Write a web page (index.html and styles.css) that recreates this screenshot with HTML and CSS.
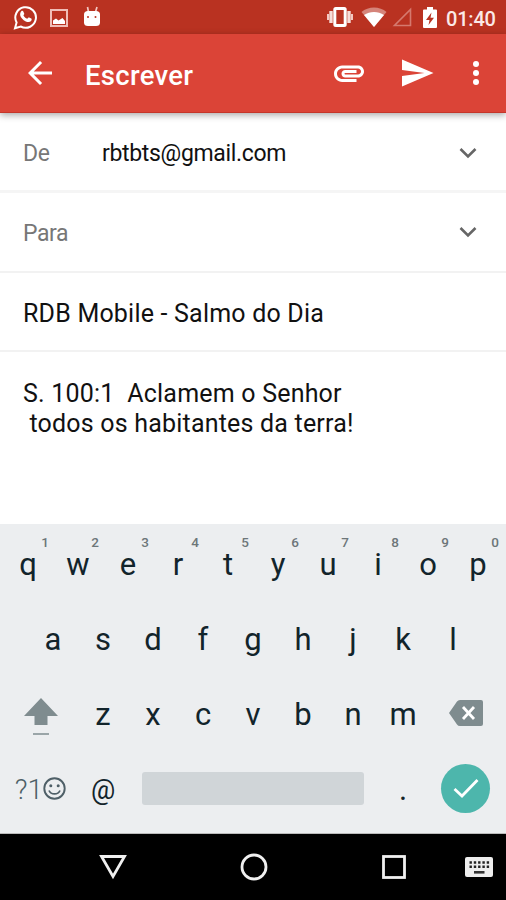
FILE: index.html
```html
<!DOCTYPE html>
<html lang="pt-BR">
<head>
    <meta charset="UTF-8">
    <meta name="viewport" content="width=device-width, initial-scale=1.0">
    <title>Escrever</title>
    <link rel="stylesheet" href="styles.css">
</head>
<body>
    <div class="status">
        <svg class="whats" width="25" height="26" viewBox="0 0 25 26">
            <path d="M2 24.200l1.600-5.800A10.300 10.300 0 1 1 7.700 22.500z" fill="none" stroke="#fff" stroke-width="2"/>
            <path d="M8.300 7.200c.8-.8 1.700-.5 2 .2l.9 2c.2.700-.2 1.100-.8 1.800.9 1.700 2.100 2.800 3.900 3.500.8-.9 1.200-1.500 1.900-1.200l2.100 1c.7.400.4 1.700-.2 2.400-1.200 1.300-3 1.500-5.300.5-3-1.300-5.200-4.200-5.600-6.200-.2-1.700.3-3.100 1.100-4z" fill="#fff"/>
        </svg>
        <svg class="image" width="18" height="18" viewBox="0 0 18 18">
            <rect x="1" y="1" width="16" height="16" fill="none" stroke="#f0bdb6" stroke-width="2"/>
            <path d="M3 15v-3.500l3-2 2.500 2 4-2.500 2.500 3V15z" fill="#fff"/>
        </svg>
        <svg class="droid" width="18" height="21" viewBox="0 0 18 21">
            <path d="M4.500 1l1 5M14 1l-1.500 5" stroke="#f3c8c2" stroke-width="1.700"/>
            <path d="M1 8.500q0-3.500 4-3.500h8q4 0 4 3.500v8q0 3.500-4 3.500H5q-4 0-4-3.500z" fill="#fff"/>
            <circle cx="5" cy="11" r="1" fill="#b93221"/>
            <circle cx="12.500" cy="11" r="1" fill="#b93221"/>
        </svg>
        <div class="right">
            <svg class="vibrate" width="26" height="20" viewBox="0 0 26 20">
                <path d="M1 7v6M25 7v6" stroke="#f3c8c2" stroke-width="2"/>
                <path d="M4 4v12M22 4v12" stroke="#f7dcd8" stroke-width="3.400"/>
                <rect x="7.800" y="1.500" width="10.400" height="17" rx="1" fill="none" stroke="#fff" stroke-width="3"/>
            </svg>
            <svg class="wifi" width="26" height="20" viewBox="0 0 26 20">
                <path d="M0.500 5C7-1 19-1 25.500 5L13 20z" fill="#d5847a"/>
                <path d="M3 8C9 4 17 4 23 8L13 20z" fill="#fff"/>
            </svg>
            <svg class="signal" width="20" height="20" viewBox="0 0 20 20">
                <path d="M2.500 18.500h16v-16z" fill="none" stroke="#d5796e" stroke-width="1.600"/>
            </svg>
            <svg class="battery" width="14" height="21" viewBox="0 0 14 21">
                <path d="M4 0h6v2.500h3q1 0 1 1V20q0 1-1 1H1q-1 0-1-1V3.500q0-1 1-1h3z" fill="#fff"/>
                <path d="M8.500 5.500L3 13h3.500L5.500 18 11 10.800H7.500z" fill="#b93221"/>
            </svg>
            <span class="time">01:40</span>
        </div>
    </div>

    <div class="toolbar">
        <svg class="icon" viewBox="0 0 24 24"><path d="M20 11H7.830l5.590-5.590L12 4l-8 8 8 8 1.410-1.410L7.830 13H20v-2z"/></svg>
        <h1>Escrever</h1>
        <svg class="icon attach" viewBox="0 0 24 24"><path d="M2 12.500C2 9.460 4.460 7 7.500 7H18c2.210 0 4 1.790 4 4s-1.790 4-4 4H9.500C8.120 15 7 13.880 7 12.500S8.120 10 9.500 10H17v2H9.410c-.55 0-.55 1 0 1H18c1.100 0 2-.9 2-2s-.9-2-2-2H7.500C5.570 9 4 10.570 4 12.500S5.570 16 7.500 16H17v2H7.500C4.460 18 2 15.540 2 12.500z"/></svg>
        <svg class="icon send" viewBox="0 0 24 24"><path d="M2.010 21L23 12 2.010 3 2 10l15 2-15 2z"/></svg>
        <svg class="icon more" viewBox="0 0 24 24"><circle cx="12" cy="6" r="2"/><circle cx="12" cy="12" r="2"/><circle cx="12" cy="18" r="2"/></svg>
    </div>

    <div class="mail">
        <div class="row from">
            <span class="label">De</span>
            <span class="address">rbtbts@gmail.com</span>
            <svg class="arrow" width="18" height="12" viewBox="0 0 18 12"><path d="M1.500 2L9 9.500 16.500 2"/></svg>
        </div>
        <div class="row to">
            <span class="label">Para</span>
            <svg class="arrow" width="18" height="12" viewBox="0 0 18 12"><path d="M1.500 2L9 9.500 16.500 2"/></svg>
        </div>
        <div class="row subject">RDB Mobile - Salmo do Dia</div>
        <div class="message"><p class="line1">S. 100:1  Aclamem o Senhor</p><p class="line2"> todos os habitantes da terra!</p></div>
    </div>

    <div class="keyboard">
        <div class="keys">
            <div class="key">q<sup>1</sup></div>
            <div class="key">w<sup>2</sup></div>
            <div class="key">e<sup>3</sup></div>
            <div class="key">r<sup>4</sup></div>
            <div class="key">t<sup>5</sup></div>
            <div class="key">y<sup>6</sup></div>
            <div class="key">u<sup>7</sup></div>
            <div class="key">i<sup>8</sup></div>
            <div class="key">o<sup>9</sup></div>
            <div class="key">p<sup>0</sup></div>
        </div>
        <div class="keys">
            <div class="key">a</div>
            <div class="key">s</div>
            <div class="key">d</div>
            <div class="key">f</div>
            <div class="key">g</div>
            <div class="key">h</div>
            <div class="key">j</div>
            <div class="key">k</div>
            <div class="key">l</div>
        </div>
        <div class="keys">
            <div class="key wide">
                <svg class="shift" width="34" height="38" viewBox="0 0 34 38">
                    <path d="M17 0l17 18H23.500v9h-13v-9H0z" fill="#7f8c8f"/>
                    <path d="M9 36h16" stroke="#9aa5a8" stroke-width="2"/>
                </svg>
            </div>
            <div class="key">z</div>
            <div class="key">x</div>
            <div class="key">c</div>
            <div class="key">v</div>
            <div class="key">b</div>
            <div class="key">n</div>
            <div class="key">m</div>
            <div class="key wide">
                <svg class="del" width="34" height="26" viewBox="0 0 34 26">
                    <path d="M0 13L8 1.500Q9 0 11 0H32q2 0 2 2V24q0 2-2 2H11q-2 0-3-1.500z" fill="#7f8c8f"/>
                    <path d="M14 7l11 12M25 7L14 19" stroke="#fff" stroke-width="2.800"/>
                </svg>
            </div>
        </div>
        <div class="keys">
            <div class="key wide symbols">?1<svg width="23" height="23" viewBox="0 0 23 23">
                    <circle cx="11.500" cy="11.500" r="10.200" fill="none" stroke="#4e5f67" stroke-width="1.900"/>
                    <circle cx="7.800" cy="8.800" r="1.500" fill="#4e5f67"/>
                    <circle cx="15.200" cy="8.800" r="1.500" fill="#4e5f67"/>
                    <path d="M6 13.500c2 4.500 9 4.500 11 0" fill="none" stroke="#4e5f67" stroke-width="1.700"/>
                </svg></div>
            <div class="key at">@</div>
            <div class="key spacebar"><div class="space"></div></div>
            <div class="key dot">.</div>
            <div class="key wide">
                <div class="enter">
                    <svg width="26" height="20" viewBox="0 0 26 20"><path d="M1.500 11l7.500 7L24.500 2" fill="none" stroke="#fff" stroke-width="2.800"/></svg>
                </div>
            </div>
        </div>
    </div>

    <div class="nav">
        <div class="btn"><svg width="28" height="26" viewBox="0 0 28 26"><path d="M2.500 2.500h23L14 22.500z"/></svg></div>
        <div class="btn"><svg width="28" height="28" viewBox="0 0 28 28"><circle cx="14" cy="14" r="12"/></svg></div>
        <div class="btn"><svg width="26" height="26" viewBox="0 0 26 26"><rect x="2.500" y="2.500" width="21" height="21"/></svg></div>
        <svg class="ime" width="28" height="20" viewBox="0 0 28 20">
            <rect width="28" height="20" rx="2" fill="#eee"/>
            <path d="M4.500 5.500h20M4.500 9.800h20" stroke="#222" stroke-width="2.400" stroke-dasharray="2.400 1.900"/>
            <path d="M9 15.300h10.500" stroke="#333" stroke-width="2.600"/>
        </svg>
    </div>
</body>
</html>
```

FILE: styles.css
```css
*{
    box-sizing: border-box;
}

body{
    margin: 0;
    width: 506px;
    height: 900px;
    overflow: hidden;
    background-color: #fff;
    font-family: Roboto, sans-serif;
}

svg{
    display: block;
    flex-shrink: 0;
}

/* status bar */
.status{
    display: flex;
    align-items: center;
    height: 34px;
    padding: 0 10px 0 13px;
    background-color: #b93221;
}
.whats{
    margin-bottom: 1px;
}
.image{
    margin-left: 12px;
    margin-top: 2px;
}
.droid{
    margin-left: 15px;
    margin-bottom: 2px;
}
.right{
    display: flex;
    align-items: center;
    margin-left: auto;
}
.wifi{
    margin-left: 8px;
}
.signal{
    margin-left: 5px;
}
.battery{
    margin-left: 11px;
}
.time{
    width: 50px;
    margin-left: 9px;
    color: #fbe9e7;
    font-size: 20px;
    font-weight: 500;
    line-height: 34px;
    padding-top: 2px;
    height: 34px;
    letter-spacing: -0.200px;
    white-space: nowrap;
}

/* toolbar */
.toolbar{
    position: relative;
    display: flex;
    align-items: center;
    height: 79px;
    padding: 0 12px 0 22px;
    background-color: #db4437;
    border-bottom: 1px solid #c5362a;
    box-shadow: 0 2px 7px rgba(0,0,0,0.35);
}
.toolbar h1{
    margin: 5px 0 0 27px;
    color: #fff;
    font-size: 27.500px;
    font-weight: 500;
    line-height: 36px;
    letter-spacing: 0.300px;
}
.icon{
    width: 36px;
    height: 36px;
    fill: #fff;
}
.attach{
    margin-left: auto;
}
.send{
    margin-left: 32px;
}
.more{
    margin-left: 23px;
}

/* mail fields */
.mail{
    height: 411px;
}
.row{
    display: flex;
    align-items: center;
    height: 80px;
    padding: 2px 29px 0 23px;
    border-bottom: 2px solid #f2f2f2;
    font-size: 23px;
    color: #111;
}
.from{
    padding-top: 4px;
    border-bottom: 3px solid #f5f5f5;
}
.subject{
    height: 79px;
    padding-top: 4px;
    font-size: 25px;
    letter-spacing: 0.200px;
}
.label{
    width: 79px;
    color: #777;
    letter-spacing: -0.400px;
}
.address{
    letter-spacing: -0.330px;
}
.arrow{
    margin-left: auto;
    margin-bottom: 2px;
    fill: none;
    stroke: #666;
    stroke-width: 2.6px;
}
.message{
    padding: 27px 23px;
    color: #111;
    font-size: 25px;
    line-height: 29.500px;
    letter-spacing: 0.200px;
    white-space: pre;
}
.message p{
    margin: 0;
}

/* keyboard */
.keyboard{
    height: 310px;
    padding: 3px 3px 0;
    background-color: #eceef0;
    border-bottom: 1px solid #bbb;
}
.keys{
    display: flex;
    justify-content: center;
    height: 75px;
}
.key{
    position: relative;
    display: flex;
    align-items: center;
    justify-content: center;
    width: 50px;
    height: 75px;
    color: #12242b;
    font-size: 31px;
}
.key sup{
    position: absolute;
    top: 6px;
    right: -1px;
    width: 18px;
    color: #6d7679;
    font-size: 13.500px;
    font-weight: 500;
    line-height: 18px;
    text-align: center;
}
.wide{
    width: 75px;
}
.shift{
    margin-top: 5px;
}
.del{
    margin-bottom: 4px;
}
.symbols{
    color: #4e5f67;
    font-size: 28px;
    font-weight: 300;
}
.symbols svg{
    margin-bottom: 2px;
}
.at{
    font-size: 27px;
}
.spacebar{
    width: 250px;
}
.space{
    width: 222px;
    height: 33px;
    margin-bottom: 2px;
    border-radius: 3px;
    background-color: #d0d5d8;
}
.enter{
    display: flex;
    align-items: center;
    justify-content: center;
    width: 49px;
    height: 49px;
    margin-bottom: 3px;
    border-radius: 50%;
    background-color: #4db6ac;
}

/* navigation bar */
.nav{
    display: flex;
    align-items: center;
    height: 66px;
    padding-left: 43px;
    background-color: #000;
}
.btn{
    display: flex;
    justify-content: center;
    width: 140.500px;
}
.btn svg{
    fill: none;
    stroke: #f0f0f0;
    stroke-width: 2.800px;
}
```
